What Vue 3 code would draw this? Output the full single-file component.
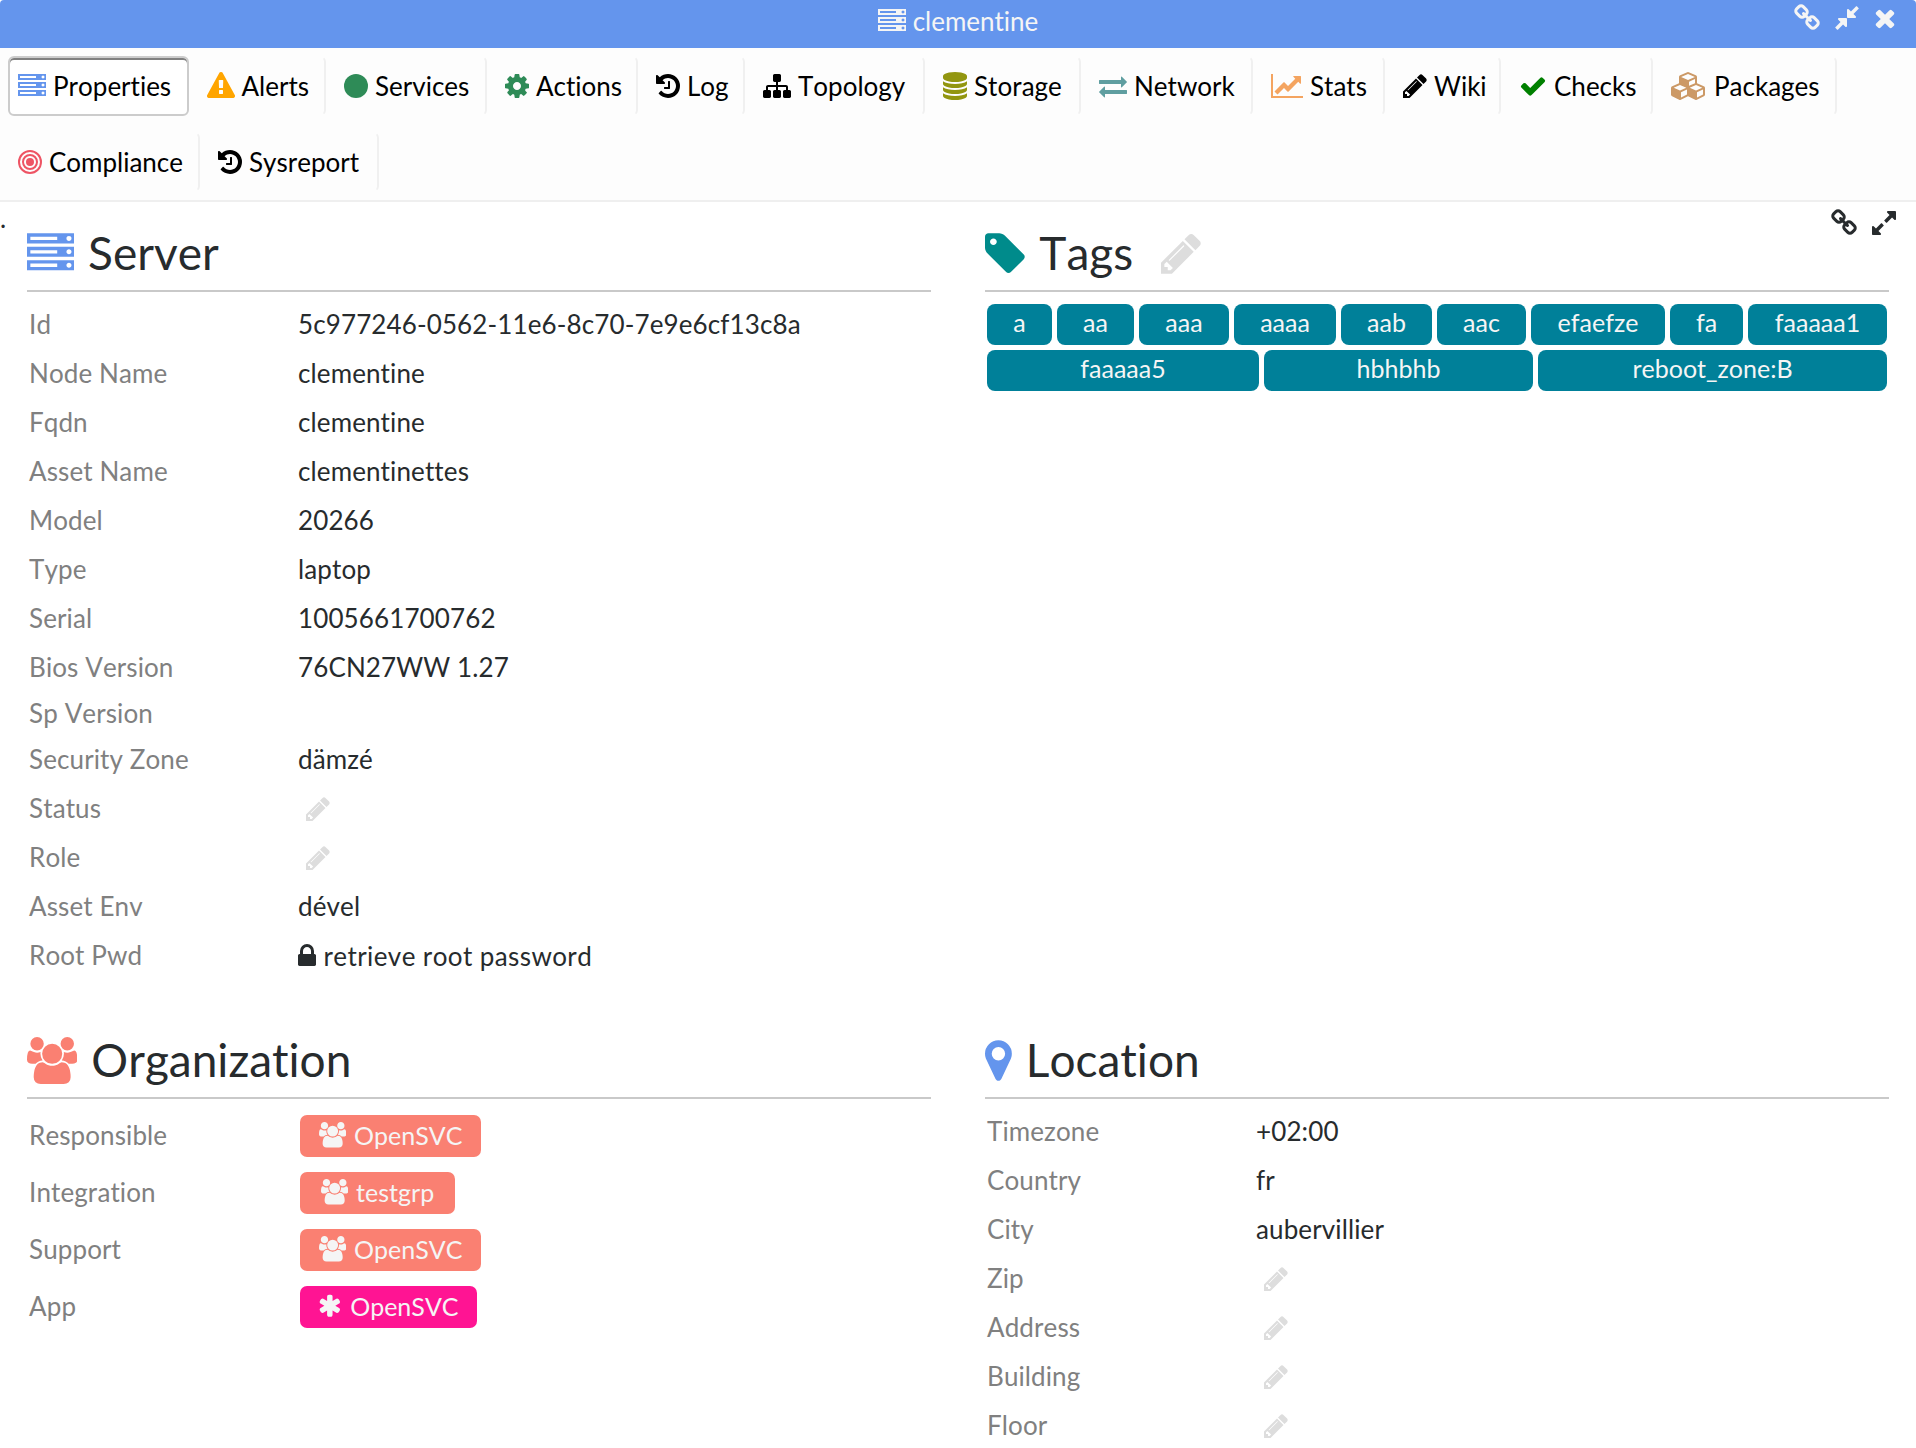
<script setup>
import { h } from 'vue'

// name: [left edge, advance width, path]; every glyph is 1792 units high
const glyphs = {
  server: [0, 1792, 'M128 1408h1024v-128h-1024v128zm0-512h1024v-128h-1024v128zm1568 448q0-40-28-68t-68-28-68 28-28 68 28 68 68 28 68-28 28-68zm-1568-960h1024v-128h-1024v128zm1568 448q0-40-28-68t-68-28-68 28-28 68 28 68 68 28 68-28 28-68zm0-512q0-40-28-68t-68-28-68 28-28 68 28 68 68 28 68-28 28-68zm96 832v384h-1792v-384h1792zm0-512v384h-1792v-384h1792zm0-512v384h-1792v-384h1792z'],
  warning: [0, 1792, 'M1024 1375v-190q0-14-9.5-23.5t-22.5-9.5h-192q-13 0-22.5 9.5t-9.5 23.5v190q0 14 9.5 23.5t22.5 9.5h192q13 0 22.5-9.5t9.5-23.5zm-2-374l18-459q0-12-10-19-13-11-24-11h-220q-11 0-24 11-10 7-10 21l17 457q0 10 10 16.5t24 6.5h185q14 0 23.5-6.5t10.5-16.5zm-14-934l768 1408q35 63-2 126-17 29-46.5 46t-63.5 17h-1536q-34 0-63.5-17t-46.5-46q-37-63-2-126l768-1408q17-31 47-49t65-18 65 18 47 49z'],
  circle: [128, 1536, 'M128 896a768 768 0 1 0 1536 0a768 768 0 1 0-1536 0z'],
  cog: [128, 1536, 'M1152 896q0-106-75-181t-181-75-181 75-75 181 75 181 181 75 181-75 75-181zm512-109v222q0 12-8 23t-20 13l-185 28q-19 54-39 91 35 50 107 138 10 12 10 25t-9 23q-27 37-99 108t-94 71q-12 0-26-9l-138-108q-44 23-91 38-16 136-29 186-7 28-36 28h-222q-14 0-24.5-8.5t-11.5-21.5l-28-184q-49-16-90-37l-141 107q-10 9-25 9-14 0-25-11-126-114-165-168-7-10-7-23 0-12 8-23 15-21 51-66.5t54-70.5q-27-50-41-99l-183-27q-13-2-21-12.5t-8-23.5v-222q0-12 8-23t19-13l186-28q14-46 39-92-40-57-107-138-10-12-10-24 0-10 9-23 26-36 98.5-107.5t94.5-71.5q13 0 26 10l138 107q44-23 91-38 16-136 29-186 7-28 36-28h222q14 0 24.5 8.5t11.5 21.5l28 184q49 16 90 37l142-107q9-9 24-9 13 0 25 10 129 119 165 170 7 8 7 22 0 12-8 23-15 21-51 66.5t-54 70.5q26 50 41 98l183 28q13 2 21 12.5t8 23.5z'],
  history: [128, 1536, 'M1664 896q0 156-61 298t-164 245-245 164-298 61q-172 0-327-72.5t-264-204.5q-7-10-6.5-22.5t8.5-20.5l137-138q10-9 25-9 16 2 23 12 73 95 179 147t225 52q104 0 198.5-40.5t163.5-109.5 109.5-163.5 40.5-198.5-40.5-198.5-109.5-163.5-163.5-109.5-198.5-40.5q-98 0-188 35.5t-160 101.5l137 138q31 30 14 69-17 40-59 40h-448q-26 0-45-19t-19-45v-448q0-42 40-59 39-17 69 14l130 129q107-101 244.5-156.5t284.5-55.5q156 0 298 61t245 164 164 245 61 298zm-640-288v448q0 14-9 23t-23 9h-320q-14 0-23-9t-9-23v-64q0-14 9-23t23-9h224v-352q0-14 9-23t23-9h64q14 0 23 9t9 23z'],
  sitemap: [0, 1792, 'M1792 1248v320q0 40-28 68t-68 28h-320q-40 0-68-28t-28-68v-320q0-40 28-68t68-28h96v-192h-512v192h96q40 0 68 28t28 68v320q0 40-28 68t-68 28h-320q-40 0-68-28t-28-68v-320q0-40 28-68t68-28h96v-192h-512v192h96q40 0 68 28t28 68v320q0 40-28 68t-68 28h-320q-40 0-68-28t-28-68v-320q0-40 28-68t68-28h96v-192q0-52 38-90t90-38h512v-192h-96q-40 0-68-28t-28-68v-320q0-40 28-68t68-28h320q40 0 68 28t28 68v320q0 40-28 68t-68 28h-96v192h512q52 0 90 38t38 90v192h96q40 0 68 28t28 68z'],
  database: [128, 1536, 'M896 768q237 0 443-43t325-127v170q0 69-103 128t-280 93.5-385 34.5-385-34.5-280-93.5-103-128v-170q119 84 325 127t443 43zm0 768q237 0 443-43t325-127v170q0 69-103 128t-280 93.5-385 34.5-385-34.5-280-93.5-103-128v-170q119 84 325 127t443 43zm0-384q237 0 443-43t325-127v170q0 69-103 128t-280 93.5-385 34.5-385-34.5-280-93.5-103-128v-170q119 84 325 127t443 43zm0-1152q208 0 385 34.5t280 93.5 103 128v128q0 69-103 128t-280 93.5-385 34.5-385-34.5-280-93.5-103-128v-128q0-69 103-128t280-93.5 385-34.5z'],
  exchange: [0, 1792, 'M1792 1184v192q0 13-9.5 22.5t-22.5 9.5h-1376v192q0 13-9.5 22.5t-22.5 9.5q-12 0-24-10l-319-320q-9-9-9-22 0-14 9-23l320-320q9-9 23-9 13 0 22.5 9.5t9.5 22.5v192h1376q13 0 22.5 9.5t9.5 22.5zm0-544q0 14-9 23l-320 320q-9 9-23 9-13 0-22.5-9.5t-9.5-22.5v-192h-1376q-13 0-22.5-9.5t-9.5-22.5v-192q0-13 9.5-22.5t22.5-9.5h1376v-192q0-14 9-23t23-9q12 0 24 10l319 319q9 9 9 23z'],
  chart: [0, 2048, 'M2048 1536v128h-2048v-1536h128v1408h1920zm-128-1248v435q0 21-19.5 29.5t-35.5-7.5l-121-121-633 633q-10 10-23 10t-23-10l-233-233-416 416-192-192 585-585q10-10 23-10t23 10l233 233 464-464-121-121q-16-16-7.5-35.5t29.5-19.5h435q14 0 23 9t9 23z'],
  pencil: [128, 1536, 'M491 1536l91-91-235-235-91 91v107h128v128h107zm523-928q0-22-22-22-10 0-17 7l-542 542q-7 7-7 17 0 22 22 22 10 0 17-7l542-542q7-7 7-17zm-54-192l416 416-832 832h-416v-416zm683 96q0 53-37 90l-166 166-416-416 166-165q36-38 90-38 53 0 91 38l235 234q37 39 37 91z'],
  check: [0, 1792, 'M1671 566q0 40-28 68l-724 724-136 136q-28 28-68 28t-68-28l-136-136-362-362q-28-28-28-68t28-68l136-136q28-28 68-28t68 28l294 295 656-657q28-28 68-28t68 28l136 136q28 28 28 68z'],
  cubes: [0, 2304, 'M640 1632l384-192v-314l-384 164v342zm-64-454l404-173-404-173-404 173zm1088 454l384-192v-314l-384 164v342zm-64-454l404-173-404-173-404 173zm-448-293l384-165v-266l-384 164v267zm-64-379l441-189-441-189-441 189zm1088 518v416q0 36-19 67t-52 47l-448 224q-25 14-57 14t-57-14l-448-224q-4-2-7-4-2 2-7 4l-448 224q-25 14-57 14t-57-14l-448-224q-33-16-52-47t-19-67v-416q0-38 21.5-70t56.5-48l434-186v-400q0-38 21.5-70t56.5-48l448-192q23-10 50-10t50 10l448 192q35 16 56.5 48t21.5 70v400l434 186q36 16 57 48t21 70z'],
  bullseye: [128, 1536, 'M640 896a256 256 0 1 0 512 0a256 256 0 1 0-512 0zM384 896a512 512 0 1 0 1024 0a512 512 0 1 0-1024 0zM512 896a384 384 0 1 1 768 0a384 384 0 1 1-768 0zM128 896a768 768 0 1 0 1536 0a768 768 0 1 0-1536 0zM256 896a640 640 0 1 1 1280 0a640 640 0 1 1-1280 0z'],
  users: [0, 1920, 'M593 896q-162 5-265 128h-134q-82 0-138-40.5t-56-118.5q0-353 124-353 6 0 43.5 21t97.5 42.5 119 21.5q67 0 133-23-5 37-5 66 0 139 81 256zm1071 637q0 120-73 189.5t-194 69.5h-874q-121 0-194-69.5t-73-189.5q0-53 3.5-103.5t14-109 26.5-108.5 43-97.5 62-81 85.5-53.5 111.5-20q10 0 43 21.5t73 48 107 48 135 21.5 135-21.5 107-48 73-48 43-21.5q61 0 111.5 20t85.5 53.5 62 81 43 97.5 26.5 108.5 14 109 3.5 103.5zm-1024-1277q0 106-75 181t-181 75-181-75-75-181 75-181 181-75 181 75 75 181zm704 384q0 159-112.5 271.5t-271.5 112.5-271.5-112.5-112.5-271.5 112.5-271.5 271.5-112.5 271.5 112.5 112.5 271.5zm576 225q0 78-56 118.5t-138 40.5h-134q-103-123-265-128 81-117 81-256 0-29-5-66 66 23 133 23 59 0 119-21.5t97.5-42.5 43.5-21q124 0 124 353zm-128-609q0 106-75 181t-181 75-181-75-75-181 75-181 181-75 181 75 75 181z'],
  link: [64, 1664, 'M1520 1216q0-40-28-68l-208-208q-28-28-68-28-42 0-72 32 3 3 19 18.5t21.5 21.5 15 19 13 25.5 3.5 27.5q0 40-28 68t-68 28q-15 0-27.5-3.5t-25.5-13-19-15-21.5-21.5-18.5-19q-33 31-33 73 0 40 28 68l206 207q27 27 68 27 40 0 68-26l147-146q28-28 28-67zm-703-705q0-40-28-68l-206-207q-28-28-68-28-39 0-68 27l-147 146q-28 28-28 67 0 40 28 68l208 208q27 27 68 27 42 0 72-31-3-3-19-18.5t-21.5-21.5-15-19-13-25.5-3.5-27.5q0-40 28-68t68-28q15 0 27.5 3.5t25.5 13 19 15 21.5 21.5 18.5 19q33-31 33-73zm895 705q0 120-85 203l-147 146q-83 83-203 83-121 0-204-85l-206-207q-83-83-83-203 0-123 88-209l-88-88q-86 88-208 88-120 0-204-84l-208-208q-84-84-84-204t85-203l147-146q83-83 203-83 121 0 204 85l206 207q83 83 83 203 0 123-88 209l88 88q86-88 208-88 120 0 204 84l208 208q84 84 84 204z'],
  compress: [128, 1536, 'M896 960v448q0 26-19 45t-45 19-45-19l-144-144-332 332q-10 10-23 10t-23-10l-114-114q-10-10-10-23t10-23l332-332-144-144q-19-19-19-45t19-45 45-19h448q26 0 45 19t19 45zm755-672q0 13-10 23l-332 332 144 144q19 19 19 45t-19 45-45 19h-448q-26 0-45-19t-19-45v-448q0-26 19-45t45-19 45 19l144 144 332-332q10-10 23-10t23 10l114 114q10 10 10 23z'],
  expand: [128, 1536, 'M883 1056q0 13-10 23l-332 332 144 144q19 19 19 45t-19 45-45 19h-448q-26 0-45-19t-19-45v-448q0-26 19-45t45-19 45 19l144 144 332-332q10-10 23-10t23 10l114 114q10 10 10 23zm781-864v448q0 26-19 45t-45 19-45-19l-144-144-332 332q-10 10-23 10t-23-10l-114-114q-10-10-10-23t10-23l332-332-144-144q-19-19-19-45t19-45 45-19h448q26 0 45 19t19 45z'],
  times: [192, 1408, 'M1490 1322q0 40-28 68l-136 136q-28 28-68 28t-68-28l-294-294-294 294q-28 28-68 28t-68-28l-136-136q-28-28-28-68t28-68l294-294-294-294q-28-28-28-68t28-68l136-136q28-28 68-28t68 28l294 294 294-294q28-28 68-28t68 28l136 136q28 28 28 68t-28 68l-294 294 294 294q28 28 28 68z'],
  tag: [128, 1536, 'M576 448q0-53-37.5-90.5t-90.5-37.5-90.5 37.5-37.5 90.5 37.5 90.5 90.5 37.5 90.5-37.5 37.5-90.5zm1067 576q0 53-37 90l-491 492q-39 37-91 37-53 0-90-37l-715-716q-38-37-64.5-101t-26.5-117v-416q0-52 38-90t90-38h416q53 0 117 26.5t102 64.5l715 714q37 39 37 91z'],
  marker: [384, 1024, 'M1152 640q0-106-75-181t-181-75-181 75-75 181 75 181 181 75 181-75 75-181zm256 0q0 109-33 179l-364 774q-16 33-47.5 52t-67.5 19-67.5-19-46.5-52l-365-774q-33-70-33-179 0-212 150-362t362-150 362 150 150 362z'],
  lock: [320, 1152, 'M640 768h512v-192q0-106-75-181t-181-75-181 75-75 181v192zm832 96v576q0 40-28 68t-68 28h-960q-40 0-68-28t-28-68v-576q0-40 28-68t68-28h32v-192q0-184 132-316t316-132 316 132 132 316v192h32q40 0 68 28t28 68z'],
  asterisk: [64, 1664, 'M1546 1050q46 26 59.5 77.5t-12.5 97.5l-64 110q-26 46-77.5 59.5t-97.5-12.5l-266-153v307q0 52-38 90t-90 38h-128q-52 0-90-38t-38-90v-307l-266 153q-46 26-97.5 12.5t-77.5-59.5l-64-110q-26-46-12.5-97.5t59.5-77.5l266-154-266-154q-46-26-59.5-77.5t12.5-97.5l64-110q26-46 77.5-59.5t97.5 12.5l266 153v-307q0-52 38-90t90-38h128q52 0 90 38t38 90v307l266-153q46-26 97.5-12.5t77.5 59.5l64 110q26 46 12.5 97.5t-59.5 77.5l-266 154z'],
}

const Icon = ({ name }) => {
  const [x, w, d] = glyphs[name]
  return h('svg', {
    class: 'icon',
    viewBox: `${x} 0 ${w} 1792`,
    width: `${w / 1792}em`,
    height: '1em',
    fill: 'currentColor',
  }, [h('path', { d })])
}
Icon.props = ['name']

const tabRows = [
  [
    { label: 'Properties', icon: 'server', color: '#6495ed', width: 180.5, active: true },
    { label: 'Alerts', icon: 'warning', color: '#ffa500', width: 129.5 },
    { label: 'Services', icon: 'circle', color: '#2e8b57', width: 153 },
    { label: 'Actions', icon: 'cog', color: '#2e8b57', width: 143 },
    { label: 'Log', icon: 'history', color: '#000', width: 99 },
    { label: 'Topology', icon: 'sitemap', color: '#000', width: 172 },
    { label: 'Storage', icon: 'database', color: '#929610', width: 148 },
    { label: 'Network', icon: 'exchange', color: '#5f9ea0', width: 164 },
    { label: 'Stats', icon: 'chart', color: '#f4a460', width: 124 },
    { label: 'Wiki', icon: 'pencil', color: '#000', width: 108 },
    { label: 'Checks', icon: 'check', color: '#008000', width: 144 },
    { label: 'Packages', icon: 'cubes', color: '#cc9966', width: 176 },
  ],
  [
    { label: 'Compliance', icon: 'bullseye', color: '#ee5464', width: 192 },
    { label: 'Sysreport', icon: 'history', color: '#000', width: 171 },
  ],
]

const server = [
  { k: 'Id', v: '5c977246-0562-11e6-8c70-7e9e6cf13c8a' },
  { k: 'Node Name', v: 'clementine' },
  { k: 'Fqdn', v: 'clementine' },
  { k: 'Asset Name', v: 'clementinettes' },
  { k: 'Model', v: '20266' },
  { k: 'Type', v: 'laptop' },
  { k: 'Serial', v: '1005661700762' },
  { k: 'Bios Version', v: '76CN27WW 1.27' },
  { k: 'Sp Version', short: true },
  { k: 'Security Zone', v: 'dämzé' },
  { k: 'Status', edit: true },
  { k: 'Role', edit: true },
  { k: 'Asset Env', v: 'dével' },
  { k: 'Root Pwd', v: 'retrieve root password', icon: 'lock' },
]

const tagRows = [
  [['a', 65], ['aa', 77], ['aaa', 90], ['aaaa', 102], ['aab', 91], ['aac', 89], ['efaefze', 134], ['fa', 73], ['faaaaa1', 139]],
  [['faaaaa5', 272], ['hbhbhb', 269], ['reboot_zone:B', 349]],
]

const organization = [
  { k: 'Responsible', v: 'OpenSVC', icon: 'users', width: 181 },
  { k: 'Integration', v: 'testgrp', icon: 'users', width: 155 },
  { k: 'Support', v: 'OpenSVC', icon: 'users', width: 181 },
  { k: 'App', v: 'OpenSVC', icon: 'asterisk', width: 177, app: true },
]

const location = [
  { k: 'Timezone', v: '+02:00' },
  { k: 'Country', v: 'fr' },
  { k: 'City', v: 'aubervillier' },
  { k: 'Zip', edit: true },
  { k: 'Address', edit: true },
  { k: 'Building', edit: true },
  { k: 'Floor', edit: true },
]
</script>

<template>
  <div class="window">
    <header class="titlebar">
      <div class="title"><Icon name="server" /><span>clementine</span></div>
      <div class="tools">
        <Icon name="link" /><Icon name="compress" /><Icon name="times" />
      </div>
    </header>

    <nav class="tabs">
      <div v-for="(row, i) in tabRows" :key="i" class="tab-row">
        <a
          v-for="t in row"
          :key="t.label"
          class="tab"
          :class="{ active: t.active }"
          :style="{ width: t.width + 'px' }"
        >
          <Icon :name="t.icon" :style="{ color: t.color }" /><span>{{ t.label }}</span>
        </a>
      </div>
    </nav>

    <main class="content">
      <span class="dot">.</span>
      <div class="tools panel-tools"><Icon name="link" /><Icon name="expand" /></div>

      <section class="panel server">
        <h2><Icon name="server" class="blue" /><span>Server</span></h2>
        <div v-for="r in server" :key="r.k" class="row" :class="{ short: r.short }">
          <div class="key">{{ r.k }}</div>
          <div class="value">
            <Icon v-if="r.edit" name="pencil" class="edit" />
            <Icon v-if="r.icon" :name="r.icon" class="lead" />
            <span v-if="r.v">{{ r.v }}</span>
          </div>
        </div>
      </section>

      <section class="panel">
        <h2>
          <Icon name="tag" class="teal" /><span>Tags</span><Icon name="pencil" class="edit-title" />
        </h2>
        <div class="tags">
          <div v-for="(row, i) in tagRows" :key="i" class="tag-row">
            <span v-for="[name, grow] in row" :key="name" class="tag" :style="{ flexGrow: grow }">{{ name }}</span>
          </div>
        </div>
      </section>

      <section class="panel">
        <h2><Icon name="users" class="salmon" /><span>Organization</span></h2>
        <div v-for="r in organization" :key="r.k" class="row tall">
          <div class="key">{{ r.k }}</div>
          <div class="value">
            <span class="badge" :class="{ app: r.app }" :style="{ width: r.width + 'px' }">
              <Icon :name="r.icon" /><span>{{ r.v }}</span>
            </span>
          </div>
        </div>
      </section>

      <section class="panel">
        <h2><Icon name="marker" class="blue" /><span>Location</span></h2>
        <div v-for="r in location" :key="r.k" class="row">
          <div class="key">{{ r.k }}</div>
          <div class="value">
            <Icon v-if="r.edit" name="pencil" class="edit" />
            <span v-if="r.v">{{ r.v }}</span>
          </div>
        </div>
      </section>
    </main>
  </div>
</template>

<style>
body {
  margin: 0;
  background: #fff;
}
</style>

<style scoped>
.window {
  height: 1448px;
  overflow: hidden;
  font: 26px/34px Lato, "Noto Sans", sans-serif;
  color: #272b2d;
  font-variant-ligatures: none;
  font-kerning: none;
}
.icon {
  display: block;
  flex: none;
  font-size: 28px;
}
.titlebar {
  position: relative;
  display: flex;
  justify-content: center;
  height: 48px;
  background: #6495ed;
  color: whitesmoke;
  border-radius: 4px 4px 0 0;
}
.title {
  display: flex;
  gap: 8px;
  padding-top: 7px;
}
.title span {
  margin: -3px 0 0 -1px;
}
.tools {
  position: absolute;
  top: 4px;
  right: 20px;
  display: flex;
  gap: 15px;
}
.tabs {
  display: flex;
  flex-direction: column;
  gap: 16px;
  height: 152px;
  padding-top: 8px;
  box-sizing: border-box;
  background: #fdfdfd;
  color: #000;
}
.tab-row {
  display: flex;
  gap: 8px;
  padding-left: 8px;
}
.tab {
  display: flex;
  align-items: center;
  gap: 7px;
  box-sizing: border-box;
  height: 60px;
  padding-left: 8px;
  border: 2px solid transparent;
  border-right-color: #f0f0f0;
  border-radius: 6px;
  white-space: nowrap;
}
.tab .icon {
  margin-bottom: 1px;
}
.tab span {
  padding-bottom: 1px;
}
.tab.active {
  background: #fff;
  border-color: #ccc;
  box-shadow: inset 0 2px 0 #808080;
}
.content {
  position: relative;
  display: grid;
  grid-template-columns: 904px 904px;
  grid-template-rows: 807px auto;
  column-gap: 54px;
  height: 1246px;
  padding: 0 27px;
  border-top: 2px solid #efefef;
}
.dot {
  position: absolute;
  left: 0;
  top: -1px;
}
.panel-tools {
  top: 7px;
}
h2 {
  display: flex;
  align-items: flex-start;
  gap: 14px;
  height: 60px;
  margin: 0;
  padding-top: 28px;
  border-bottom: 2px solid #c9c9c9;
  font-weight: 400;
  font-size: 46px;
  line-height: 46px;
}
h2 .icon {
  font-size: 47px;
}
h2 .edit-title {
  margin: 0 0 0 14px;
  color: #ddd;
}
.blue {
  color: #6495ed;
}
.teal {
  color: #008b8b;
}
.salmon {
  color: #fa8072;
}
h2 + .row {
  margin-top: 8px;
}
.row {
  display: flex;
  align-items: center;
  height: 49px;
  padding-left: 2px;
}
.row.short {
  height: 43px;
}
.row.tall {
  height: 57px;
}
.key {
  width: 269px;
  padding-bottom: 1px;
  color: #808080;
  letter-spacing: 0.1px;
}
.value {
  display: flex;
  align-items: center;
}
.value > span:not(.badge) {
  padding-bottom: 1px;
  letter-spacing: 0.12px;
}
.edit {
  margin-left: 7.5px;
  color: #ddd;
}
.value .lead {
  margin-right: 7.5px;
}
.value .lead + span {
  padding: 1px 0 0;
  letter-spacing: 0.4px;
}
.tags {
  display: flex;
  flex-direction: column;
  gap: 5px;
  padding: 12px 2px;
}
.tag-row {
  display: flex;
  gap: 5px;
}
.tag {
  flex: 1 1 0;
  height: 41px;
  border-radius: 8px;
  background: #008099;
  color: whitesmoke;
  font-size: 25px;
  line-height: 37px;
  text-align: center;
}
.badge {
  display: flex;
  align-items: center;
  justify-content: center;
  gap: 8px;
  height: 42px;
  margin-left: 2px;
  border-radius: 7px;
  background: #fa8072;
  color: whitesmoke;
  font-size: 25px;
  line-height: 34px;
}
.badge span {
  padding-bottom: 2px;
}
.badge .icon {
  margin-bottom: 1px;
  font-size: 25.5px;
}
.badge.app {
  background: #ff1493;
}
</style>
